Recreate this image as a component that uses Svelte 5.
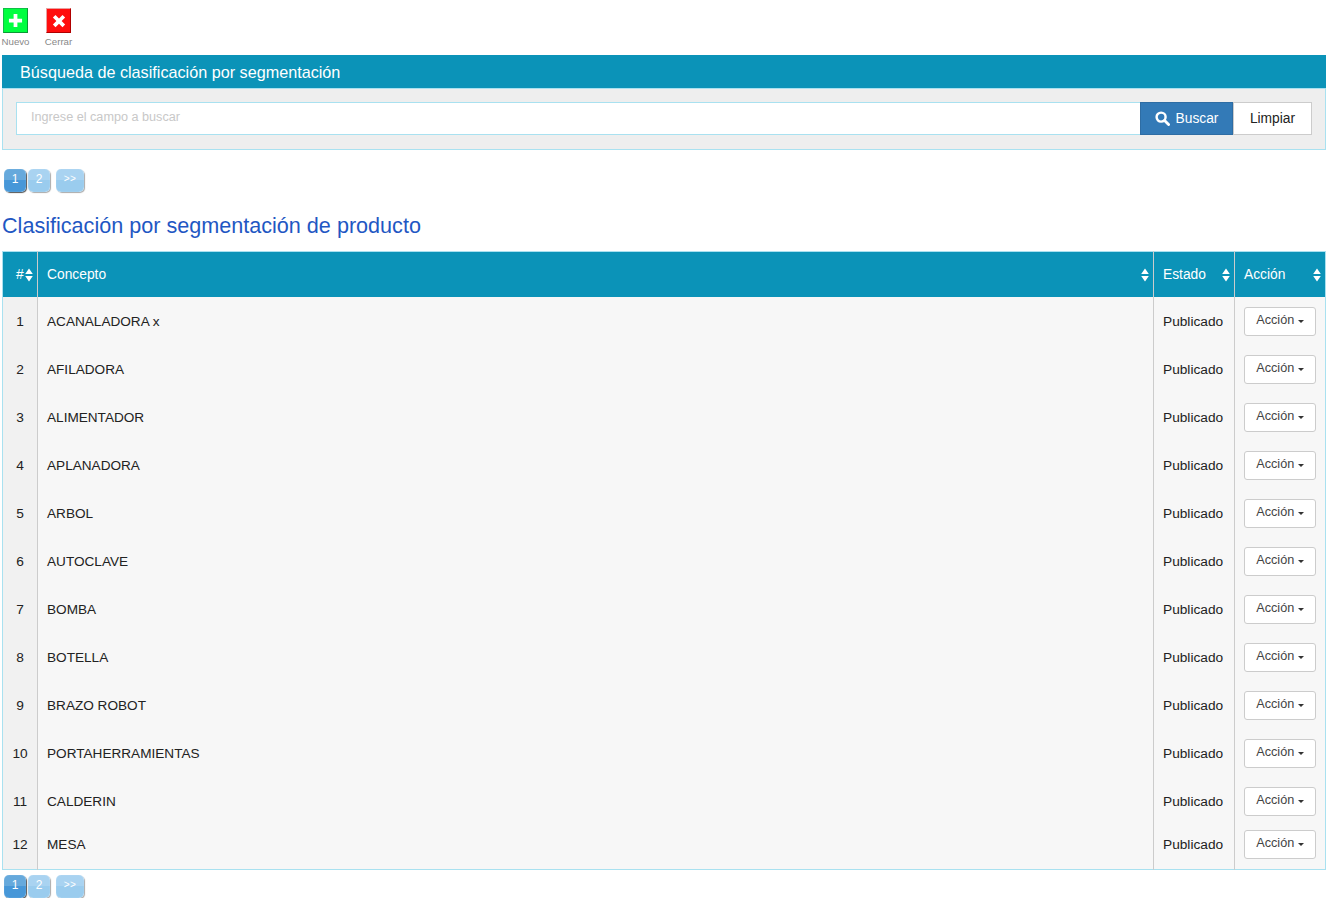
<script>
    const rows = [
        'ACANALADORA x', 'AFILADORA', 'ALIMENTADOR', 'APLANADORA', 'ARBOL', 'AUTOCLAVE',
        'BOMBA', 'BOTELLA', 'BRAZO ROBOT', 'PORTAHERRAMIENTAS', 'CALDERIN', 'MESA'
    ];
</script>

{#snippet sort()}
    <svg class="sort" viewBox="0 0 8 14" width="8" height="14"><path d="M4 0.5 7.8 6H0.2ZM4 13.5 0.2 8H7.8Z" fill="#fff" /></svg>
{/snippet}

{#snippet pager()}
    <div class="pager">
        <span class="page active">1</span>
        <span class="page">2</span>
        <span class="page next">&gt;&gt;</span>
    </div>
{/snippet}

<div class="page-wrap">
    <div class="toolbar">
        <div class="tool">
            <span class="tool-icon green">
                <svg viewBox="0 0 16 16" width="15" height="15"><path d="M6 1h4v5h5v4h-5v5H6v-5H1V6h5z" fill="#fff" /></svg>
            </span>
            <span class="tool-label">Nuevo</span>
        </div>
        <div class="tool">
            <span class="tool-icon red">
                <svg viewBox="0 0 16 16" width="14" height="14"><path d="M4 1 8 5l4-4 3 3-4 4 4 4-3 3-4-4-4 4-3-3 4-4-4-4z" fill="#fff" /></svg>
            </span>
            <span class="tool-label">Cerrar</span>
        </div>
    </div>

    <section class="panel">
        <h3 class="panel-title">Búsqueda de clasificación por segmentación</h3>
        <div class="panel-body">
            <input class="search" type="text" placeholder="Ingrese el campo a buscar" />
            <button class="btn-search">
                <svg viewBox="0 0 16 16" width="15" height="15"><circle cx="6.5" cy="6.5" r="4.8" fill="none" stroke="#fff" stroke-width="2.6" /><path d="m10.2 10.2 4.3 4.3" stroke="#fff" stroke-width="3" stroke-linecap="round" /></svg>
                Buscar
            </button>
            <button class="btn-clear">Limpiar</button>
        </div>
    </section>

    <div class="pager-top">{@render pager()}</div>

    <h2 class="title">Clasificación por segmentación de producto</h2>

    <table>
        <colgroup>
            <col class="w-num" />
            <col />
            <col class="w-state" />
            <col class="w-action" />
        </colgroup>
        <thead>
            <tr>
                <th class="c-num"><span class="th-in"><span>#</span>{@render sort()}</span></th>
                <th><span class="th-in"><span>Concepto</span>{@render sort()}</span></th>
                <th><span class="th-in"><span>Estado</span>{@render sort()}</span></th>
                <th><span class="th-in"><span>Acción</span>{@render sort()}</span></th>
            </tr>
        </thead>
        <tbody>
            {#each rows as name, i}
                <tr class:last={i === rows.length - 1}>
                    <td class="c-num">{i + 1}</td>
                    <td class="c-name">{name}</td>
                    <td>Publicado</td>
                    <td>
                        <button class="btn-action">Acción <i class="caret"></i></button>
                    </td>
                </tr>
            {/each}
        </tbody>
    </table>

    <div class="pager-bottom">{@render pager()}</div>
</div>

<style>
    :global(body) {
        margin: 0;
        background: #fff;
        font-family: "Liberation Sans", Arial, sans-serif;
        font-size: 14px;
        color: #222;
    }

    .page-wrap {
        padding: 0 2px;
    }

    .toolbar {
        display: flex;
        height: 55px;
        padding-top: 8px;
        box-sizing: border-box;
        gap: 16px;
    }
    .tool {
        display: flex;
        flex-direction: column;
        align-items: center;
        width: 27px;
    }
    .tool-icon {
        width: 25px;
        height: 25px;
        box-sizing: border-box;
        display: flex;
        align-items: center;
        justify-content: center;
        border: 1px solid;
    }
    .green { background: #00ff40; border-color: #0fc046 #0a9a35 #0a9a35 #0fc046; }
    .red { background: #ff0d0d; border-color: #e8a0a0 #b00000 #b00000 #e8a0a0; }
    .tool-label {
        margin-top: 3px;
        font-size: 9.7px;
        line-height: 12px;
        color: #888;
        white-space: nowrap;
    }

    .panel-title {
        margin: 0;
        height: 33px;
        line-height: 35px;
        padding-left: 18px;
        background: #0b93b8;
        color: #fff;
        font-size: 16.2px;
        font-weight: 400;
    }
    .panel-body {
        display: flex;
        height: 62px;
        box-sizing: border-box;
        padding: 13px 13px;
        background: #eee;
        border: 1px solid #a9e1f0;
    }
    .search {
        flex: 1;
        min-width: 0;
        height: 33px;
        box-sizing: border-box;
        padding: 0 14px 3px;
        border: 1px solid #a9e1f0;
        border-right: 0;
        background: #fff;
        font: 12.65px "Liberation Sans", Arial, sans-serif;
    }
    .search::placeholder { color: #c8c8c8; opacity: 1; }
    .btn-search {
        width: 93px;
        height: 33px;
        display: flex;
        align-items: center;
        justify-content: center;
        gap: 6px;
        background: #337ab7;
        border: 1px solid #2e6da4;
        color: #fff;
        font: 13.8px "Liberation Sans", Arial, sans-serif;
        padding: 0 0 1px;
    }
    .btn-clear {
        width: 79px;
        height: 33px;
        background: #fff;
        border: 1px solid #ccc;
        color: #222;
        font: 13.8px "Liberation Sans", Arial, sans-serif;
        padding: 0 0 1px;
    }

    .pager {
        display: flex;
        padding-left: 2px;
    }
    .pager-top {
        margin-top: 19px;
    }
    .pager-bottom {
        margin-top: 5px;
    }
    .page {
        width: 22px;
        height: 23px;
        margin-right: 2px;
        border-radius: 5px;
        display: flex;
        justify-content: center;
        padding-top: 2px;
        box-sizing: border-box;
        color: #fff;
        font-size: 12px;
        line-height: 16px;
        background: linear-gradient(#a9d3f1 0 50%, #9accee 50% 100%);
        box-shadow: 1px 1px 1px #aaa, inset 0 0 1px #d8ecfa;
    }
    .page.active {
        background: linear-gradient(#66a9dc 0 50%, #4797d8 50% 100%);
        box-shadow: 1px 1px 1px #555, inset 0 0 1px #a9d3f1;
    }
    .page.next {
        width: 28px;
        margin-left: 4px;
        font-size: 10px;
        line-height: 15px;
        letter-spacing: 0.5px;
    }

    .title {
        margin: 20px 0 12px;
        font-size: 21.6px;
        line-height: 27px;
        font-weight: 400;
        color: #1f57c3;
    }

    table {
        width: 100%;
        table-layout: fixed;
        border-collapse: collapse;
        border: 1px solid #a9e1f0;
    }
    .w-num { width: 35px; }
    .w-state { width: 81px; }
    .w-action { width: 91px; }
    th {
        height: 45px;
        box-sizing: border-box;
        padding: 0 4px 0 9px;
        background: #0b93b8;
        color: #fff;
        font-weight: 400;
        font-size: 13.8px;
        text-align: left;
        border-left: 1px solid #ccc;
    }
    th:first-child, td:first-child { border-left: 0; }
    .th-in {
        display: flex;
        align-items: center;
        justify-content: space-between;
    }
    .sort { flex: none; margin-top: 2px; }
    td {
        height: 48px;
        box-sizing: border-box;
        padding: 2px 9px 0;
        background: #f7f7f7;
        border-left: 1px solid #ccc;
        color: #222;
        font-size: 13.7px;
    }
    tr.last td {
        height: 45px;
        padding-bottom: 6px;
    }
    td.c-num {
        padding-left: 0;
        padding-right: 0;
        text-align: center;
        background: #f1f1f1;
    }
    th.c-num { padding: 0 4px 0 13px; }
    .c-name { font-size: 13.6px; }
    .btn-action {
        width: 72px;
        height: 29px;
        padding: 0 0 3px;
        display: block;
        background: #fff;
        border: 1px solid #ccc;
        border-radius: 3px;
        color: #444;
        font: 12.7px "Liberation Sans", Arial, sans-serif;
    }
    .caret {
        display: inline-block;
        width: 0;
        height: 0;
        margin: 2px 0 0 0;
        vertical-align: middle;
        border-top: 3.5px solid #333;
        border-left: 3.5px solid transparent;
        border-right: 3.5px solid transparent;
    }
</style>
